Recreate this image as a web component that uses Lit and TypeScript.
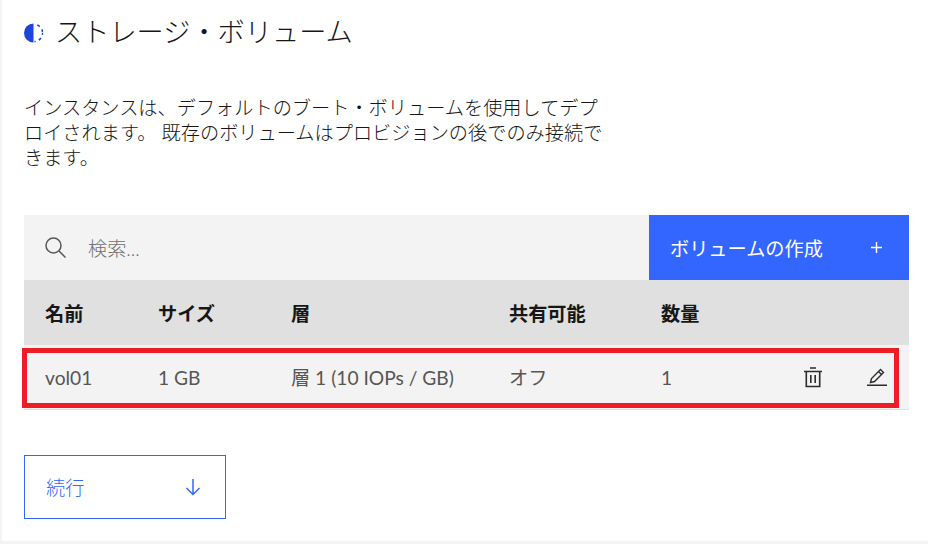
import { html, LitElement, css } from "lit";
import { customElement } from "lit/decorators.js";

const columns = ["名前", "サイズ", "層", "共有可能", "数量"];
const row = ["vol01", "1 GB", "層 1 (10 IOPs / GB)", "オフ", "1"];

@customElement("app-root")
export class AppRoot extends LitElement {
  static styles = css`
    :host {
      display: block;
      width: 928px;
      height: 544px;
      overflow: hidden;
      box-sizing: border-box;
      background: #f4f4f4;
      padding: 0 0 3px 2px;
      font-family: "Lato", "Noto Sans CJK JP", sans-serif;
      color: #161616;
    }

    .page {
      height: 100%;
      background: #fff;
      padding: 0 19px 0 22px;
      box-sizing: border-box;
    }

    .title {
      display: flex;
      align-items: center;
      gap: 12px;
      height: 64px;
      margin: 0;
      font-size: 27.2px;
      font-weight: 300;
      line-height: 64px;
    }

    .title svg {
      flex: none;
      width: 20px;
      height: 20px;
      margin-top: 2px;
    }

    .title span {
      margin-left: -1px;
    }

    .intro {
      width: 582px;
      margin: 31px 0 0;
      font-size: 19.2px;
      font-weight: 300;
      line-height: 25px;
    }

    .table {
      margin-top: 45px;
      position: relative;
    }

    .toolbar {
      display: flex;
      height: 65px;
      background: #f3f3f3;
    }

    .search {
      flex: 1;
      display: flex;
      align-items: center;
      gap: 22px;
      padding-left: 21px;
      font-size: 19.2px;
      font-weight: 300;
      color: #6f6f6f;
    }

    .search svg {
      width: 21px;
      height: 21px;
    }

    .create {
      width: 260px;
      display: flex;
      align-items: center;
      justify-content: space-between;
      box-sizing: border-box;
      padding: 0 26px 0 21px;
      background: #3366ff;
      color: #fff;
      font-size: 19.2px;
    }

    .create svg {
      width: 13px;
      height: 13px;
    }

    .cols {
      display: grid;
      grid-template-columns: 113px 133px 218px 152px 143px 63px 1fr;
      align-items: center;
      height: 65px;
      padding-left: 21px;
      box-sizing: border-box;
      font-size: 19.2px;
    }

    .head {
      background: #e0e0e0;
      font-weight: 700;
      color: #161616;
    }

    .body {
      background: #f3f3f3;
      border-bottom: 1px solid #e0e0e0;
      color: #565656;
      font-weight: 400;
    }

    .action {
      display: flex;
    }

    .highlight {
      position: absolute;
      left: -2px;
      top: 133px;
      width: 877px;
      height: 60px;
      box-sizing: border-box;
      border: 5px solid #ee1c25;
    }

    .next {
      display: flex;
      align-items: center;
      justify-content: space-between;
      box-sizing: border-box;
      width: 202px;
      height: 64px;
      margin-top: 45px;
      padding: 0 23px 0 21px;
      border: 1px solid #3366ff;
      color: #3366ff;
      font-size: 19.2px;
      font-weight: 300;
    }

    .next svg {
      width: 18px;
      height: 18px;
    }
  `;

  render() {
    return html`
      <div class="page">
        <h1 class="title">
          <svg viewBox="0 0 20 20">
            <path d="M9.5 0.5a9.5 9.5 0 0 0 0 19z" fill="#1c46d8" />
            <circle
              cx="10"
              cy="10"
              r="8.6"
              fill="none"
              stroke="#1c46d8"
              stroke-width="1.6"
              stroke-dasharray="3 3.4"
              pathLength="54"
              stroke-dashoffset="1"
              style="clip-path: inset(0 0 0 52%)"
            />
          </svg>
          <span>ストレージ・ボリューム</span>
        </h1>
        <p class="intro">
          インスタンスは、デフォルトのブート・ボリュームを使用してデプロイされます。
          既存のボリュームはプロビジョンの後でのみ接続できます。
        </p>
        <div class="table">
          <div class="toolbar">
            <div class="search">
              <svg viewBox="0 0 21 21" fill="none" stroke="#565656" stroke-width="1.5">
                <circle cx="8.5" cy="8.5" r="7.5" />
                <path d="M14 14l6.5 6.5" />
              </svg>
              検索...
            </div>
            <div class="create">
              ボリュームの作成
              <svg viewBox="0 0 13 13" stroke="#fff" stroke-width="1.4">
                <path d="M6.5 1v11M1 6.5h11" />
              </svg>
            </div>
          </div>
          <div class="cols head">${columns.map((c) => html`<div>${c}</div>`)}</div>
          <div class="cols body">
            ${row.map((c) => html`<div>${c}</div>`)}
            <div class="action">
              <svg width="18" height="21" viewBox="0 0 18 21" fill="none" stroke="#2b2b2b" stroke-width="1.6">
                <path d="M0 4.5h18M6 1h6M2.3 4.5v15h13.4v-15M6.8 8v8M11.2 8v8" />
              </svg>
            </div>
            <div class="action">
              <svg width="20" height="18" viewBox="0 0 20 18" fill="none" stroke="#2b2b2b" stroke-width="1.4">
                <path d="M0 17.3h20M3.5 14.5l1-4L13.5 1.5l3 3-9 9zM11.5 3.5l3 3" />
              </svg>
            </div>
          </div>
          <div class="highlight"></div>
        </div>
        <div class="next">
          続行
          <svg viewBox="0 0 18 18" fill="none" stroke="#3366ff" stroke-width="1.5">
            <path d="M9 1v15M2.5 10L9 16.5 15.5 10" />
          </svg>
        </div>
      </div>
    `;
  }
}
